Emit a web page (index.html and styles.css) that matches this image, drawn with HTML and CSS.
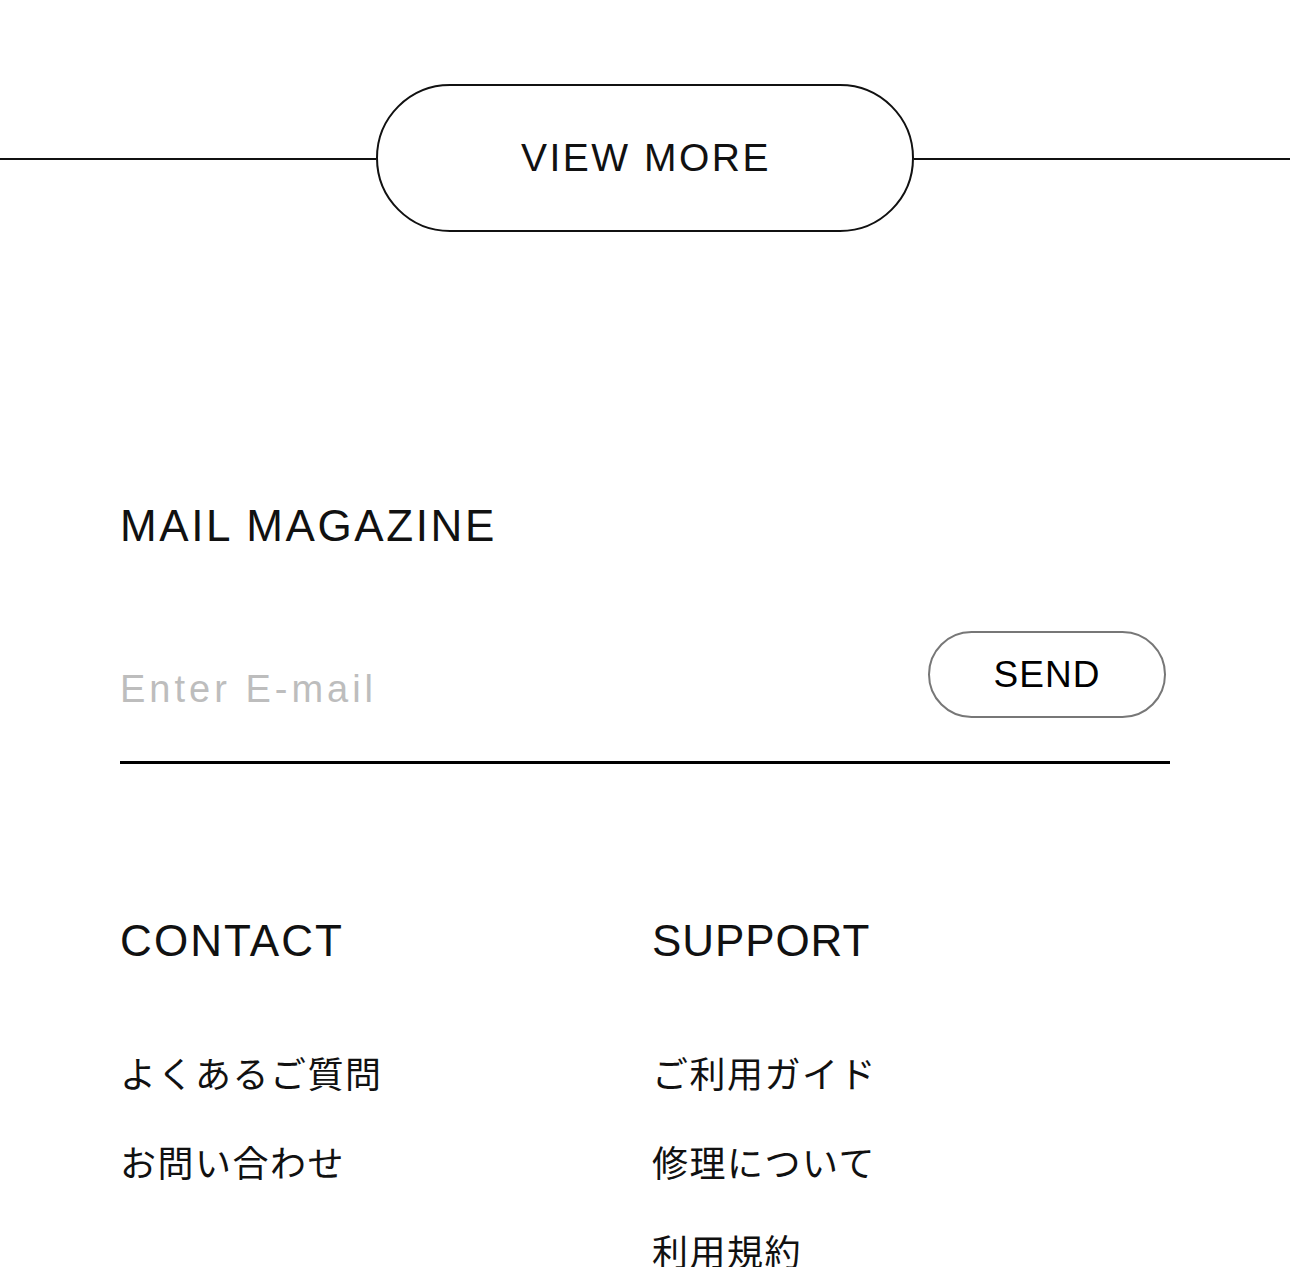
FILE: index.html
```html
<!DOCTYPE html>
<html lang="ja">
<head>
<meta charset="utf-8">
<title>Footer</title>
<link rel="stylesheet" href="styles.css">
</head>
<body>
<div class="more">
  <span class="more-line"></span>
  <a class="more-btn" href="#">VIEW MORE</a>
  <span class="more-line"></span>
</div>
<footer class="footer">
  <h2 class="mail-title">MAIL MAGAZINE</h2>
  <form class="mail-form">
    <input class="mail-input" type="email" placeholder="Enter E-mail">
    <button class="mail-send" type="button">SEND</button>
  </form>
  <div class="cols">
    <div class="col">
      <h3 class="col-title col-title-wide">CONTACT</h3>
      <ul class="links">
        <li><a href="#">よくあるご質問</a></li>
        <li><a href="#">お問い合わせ</a></li>
      </ul>
    </div>
    <div class="col">
      <h3 class="col-title">SUPPORT</h3>
      <ul class="links">
        <li><a href="#">ご利用ガイド</a></li>
        <li><a href="#">修理について</a></li>
        <li><a href="#">利用規約</a></li>
      </ul>
    </div>
  </div>
</footer>
</body>
</html>
```
FILE: styles.css
```css
* { box-sizing: border-box; }
html, body { margin: 0; padding: 0; background: #fff; }
body {
  font-family: "Liberation Sans", "Noto Sans CJK JP", sans-serif;
  color: #111;
  overflow: hidden;
}
a { color: inherit; text-decoration: none; }

.more {
  display: flex;
  align-items: center;
  padding-top: 84px;
}
.more-line {
  flex: 1;
  height: 2px;
  margin-top: 2px;
  background: #111;
}
.more-btn {
  width: 538px;
  height: 148px;
  border: 2.5px solid #111;
  border-radius: 74px;
  display: flex;
  align-items: center;
  justify-content: center;
  font-size: 39px;
  letter-spacing: 2.5px;
  padding-left: 2px;
}

.footer {
  padding: 0 120px;
}
.mail-title {
  margin: 272px 0 0;
  font-size: 44px;
  line-height: 44px;
  font-weight: 400;
  letter-spacing: 2.6px;
}
.mail-form {
  margin: 83px 0 0;
  display: flex;
  align-items: flex-end;
  border-bottom: 3px solid #000;
}
.mail-input {
  flex: 1;
  height: 60px;
  margin: 0 0 42px;
  padding: 0;
  border: 0;
  outline: none;
  font-family: "Liberation Sans", sans-serif;
  font-size: 38px;
  letter-spacing: 4px;
  color: #111;
  background: transparent;
}
.mail-input::placeholder { color: #bdbdbd; }
.mail-send {
  width: 238px;
  height: 87px;
  margin: 0 4px 43px 0;
  border: 2.5px solid #777;
  border-radius: 44px;
  background: #fff;
  font-family: "Liberation Sans", sans-serif;
  font-size: 37px;
  letter-spacing: 1px;
  color: #000;
  padding: 0;
}

.cols {
  display: grid;
  grid-template-columns: 532px 1fr;
  margin-top: 155px;
}
.col-title {
  margin: 0;
  font-size: 44px;
  line-height: 44px;
  font-weight: 400;
  letter-spacing: 0.9px;
}
.col-title-wide { letter-spacing: 2.1px; }
.links {
  list-style: none;
  margin: 91px 0 0;
  padding: 0;
  display: flex;
  flex-direction: column;
  gap: 52px;
}
.links li {
  font-family: "Noto Sans CJK JP", sans-serif;
  font-size: 36px;
  line-height: 37px;
  letter-spacing: 1.5px;
}
```
